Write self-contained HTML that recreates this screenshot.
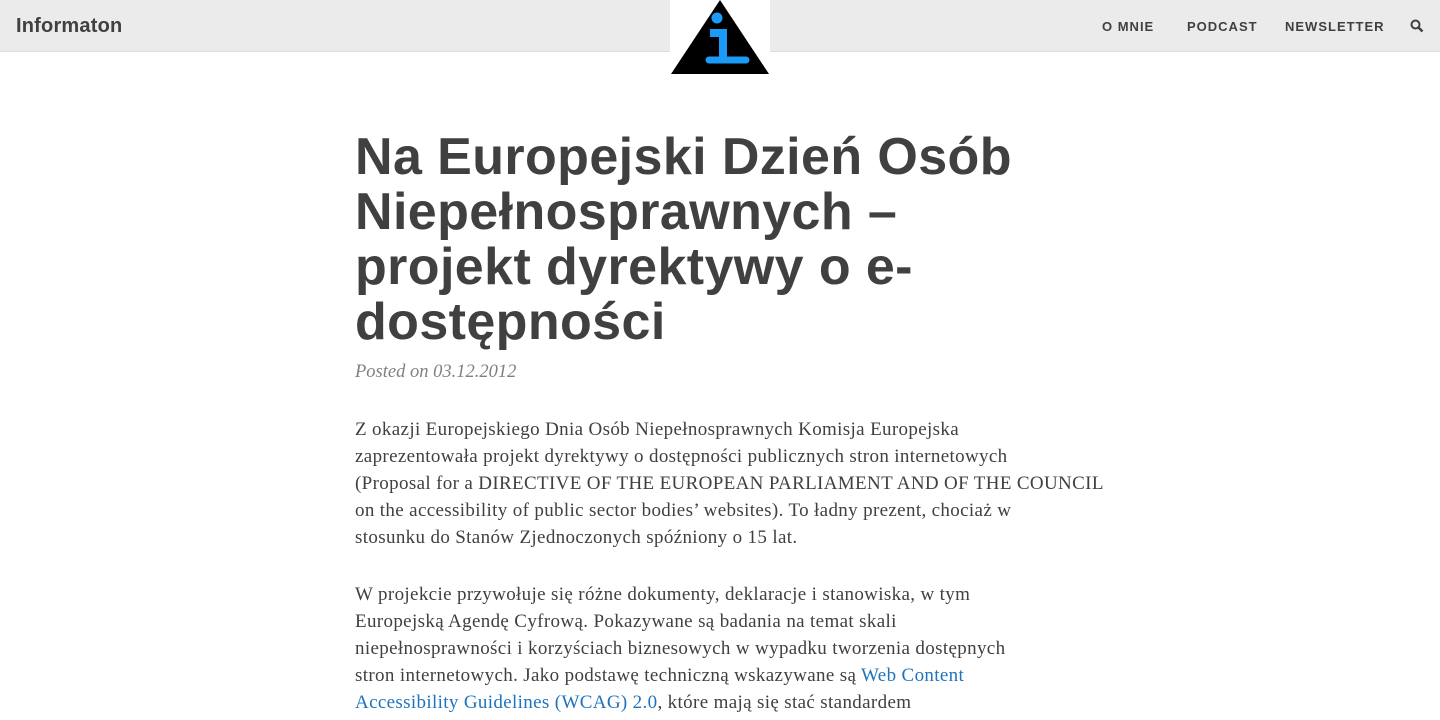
<!DOCTYPE html>
<html><head><meta charset="utf-8">
<style>
*{margin:0;padding:0;box-sizing:border-box}
body{width:1440px;height:720px;overflow:hidden;background:#fff;font-family:"Liberation Serif",serif;color:#404040;position:relative}
.hdr{position:absolute;left:0;top:0;width:1440px;height:52px;background:#ebebeb;border-bottom:1px solid #ddd}
.brand{position:absolute;left:16px;top:15px;font:bold 20px/22px "Liberation Sans",sans-serif;color:#404040;letter-spacing:0.2px}
.nav{position:absolute;top:19px;font:bold 13px/16px "Liberation Sans",sans-serif;letter-spacing:1px;color:#404040}
.logo{position:absolute;left:670px;top:0;width:100px;height:78px;background:#fff}
h1{position:absolute;left:355px;top:130px;width:760px;font:bold 52px/55px "Liberation Sans",sans-serif;color:#404040;letter-spacing:0.4px;white-space:nowrap}
.meta{position:absolute;left:355px;top:360px;font:italic 18.5px/24px "Liberation Serif",serif;color:#808080}
.p{position:absolute;left:355px;width:760px;font-size:19px;letter-spacing:0.35px;line-height:27px;white-space:nowrap}
a{color:#1e73be;text-decoration:none}
</style></head><body>
<div class="hdr">
<div class="brand">Informaton</div>
<div class="nav" style="left:1102px">O MNIE</div>
<div class="nav" style="left:1187px">PODCAST</div>
<div class="nav" style="left:1285px">NEWSLETTER</div>
<svg style="position:absolute;left:1410px;top:19px" width="14" height="14" viewBox="0 0 14 14"><circle cx="5.5" cy="5.5" r="4" fill="none" stroke="#404040" stroke-width="2"/><path d="M8.5 8.5L12.5 12.5" stroke="#404040" stroke-width="2.5"/></svg>
</div>
<div class="logo"><svg width="100" height="78" viewBox="0 0 100 78"><path d="M50 0L99 74H1Z" fill="#000"/><circle cx="47" cy="18" r="5.5" fill="#1b9af7"/><path d="M40 33H53V60" stroke="#1b9af7" stroke-width="8" fill="none"/><path d="M39 60H76" stroke="#1b9af7" stroke-width="7" stroke-linecap="round"/></svg></div>
<h1>Na Europejski Dzień Osób<br>Niepełnosprawnych –<br>projekt dyrektywy o e-<br>dostępności</h1>
<div class="meta">Posted on 03.12.2012</div>
<div class="p" style="top:416px">Z okazji Europejskiego Dnia Osób Niepełnosprawnych Komisja Europejska<br>zaprezentowała projekt dyrektywy o dostępności publicznych stron internetowych<br>(Proposal for a DIRECTIVE OF THE EUROPEAN PARLIAMENT AND OF THE COUNCIL<br>on the accessibility of public sector bodies’ websites). To ładny prezent, chociaż w<br>stosunku do Stanów Zjednoczonych spóźniony o 15 lat.</div>
<div class="p" style="top:581px">W projekcie przywołuje się różne dokumenty, deklaracje i stanowiska, w tym<br>Europejską Agendę Cyfrową. Pokazywane są badania na temat skali<br>niepełnosprawności i korzyściach biznesowych w wypadku tworzenia dostępnych<br>stron internetowych. Jako podstawę techniczną wskazywane są <a>Web Content<br>Accessibility Guidelines (WCAG) 2.0</a>, które mają się stać standardem</div>
</body></html>
